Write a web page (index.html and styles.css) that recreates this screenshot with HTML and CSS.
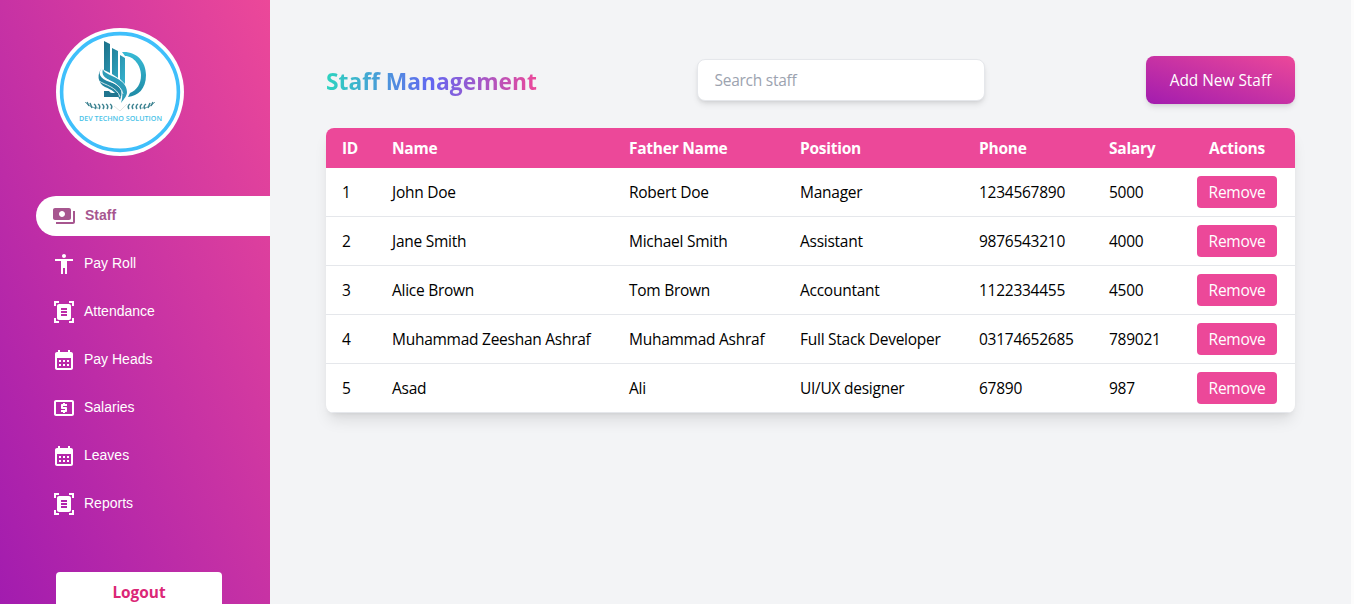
FILE: index.html
```html
<!DOCTYPE html>
<html lang="en">
<head>
<meta charset="utf-8">
<title>Staff Management</title>
<link rel="stylesheet" href="styles.css">
</head>
<body>
<svg class="defs" width="0" height="0" aria-hidden="true">
  <symbol id="i-scan" viewBox="0 0 24 24"><path d="M7 3H4v3H2V1h5v2zm15 3V1h-5v2h3v3h2zM7 21H4v-3H2v5h5v-2zm13-3v3h-3v2h5v-5h-2zM19 18c0 1.1-.9 2-2 2H7c-1.1 0-2-.9-2-2V6c0-1.1.9-2 2-2h10c1.1 0 2 .9 2 2v12zM15 8H9v2h6V8zm0 3H9v2h6v-2zm0 3H9v2h6v-2z"/></symbol>
  <symbol id="i-cal" viewBox="0 0 24 24"><path d="M19 4h-1V2h-2v2H8V2H6v2H5c-1.11 0-1.99.9-1.99 2L3 20c0 1.1.89 2 2 2h14c1.1 0 2-.9 2-2V6c0-1.1-.9-2-2-2zm0 16H5V10h14v10zM9 14H7v-2h2v2zm4 0h-2v-2h2v2zm4 0h-2v-2h2v2zm-8 4H7v-2h2v2zm4 0h-2v-2h2v2zm4 0h-2v-2h2v2z"/></symbol>
</svg>
<div class="app">
  <aside class="sidebar">
    <svg class="logo" viewBox="0 0 128 128">
      <defs>
        <linearGradient id="lg" x1="0" y1="0" x2="1" y2="1"><stop offset="0" stop-color="#1b6f88"/><stop offset="1" stop-color="#36b3cf"/></linearGradient>
        <linearGradient id="ld" x1="0" y1="0" x2="0" y2="1"><stop offset="0" stop-color="#38bbd6"/><stop offset="1" stop-color="#1f8aa5"/></linearGradient>
      </defs>
      <circle cx="64" cy="64" r="64" fill="#fff"/>
      <circle cx="64" cy="64" r="58.4" fill="none" stroke="#3fbffb" stroke-width="3.6"/>
      <path d="M66 24C80 23 90 33 90 47S82 68 72 69L74 65C81 62 85 56 85 47S78 28 69 28Z" fill="url(#ld)"/>
      <path d="M48 13L54 16V45L48 42ZM56 20L62 23V50L56 46ZM64 27L69 30V56L64 51Z" fill="url(#lg)"/>
      <path d="M46 40C41 45 44 51 54 54C64 57 68 62 64 72C60 64 56 62 49 59C41 55 41 45 46 40Z" fill="#2385a0"/>
      <path d="M47 41C48 48 71 49 71 64C71 68 68 71 65 75C69 63 64 57 55 53C49 50 45 47 47 41Z" fill="#2e9cb8"/>
      <path d="M45 47C50 53 65 55 67 66M43 53C49 57 61 59 64 69" fill="none" stroke="#fff" stroke-width=".8"/>
      <path d="M48 63H53Q54 65 56 65H62V69H48Z" fill="#20758f"/>
      <g fill="none" stroke="#3f8492" stroke-width="1.5">
        <path d="M29 74Q34 80 42 80M99 74Q94 80 86 80" stroke-width=".7"/>
        <path d="M31 74l2 4M34 75l2 5M38 76q3 2 1 5M42 76q3 2 1 5M46 76q3 2 1 5M50 76q3 2 1 5M54 76q3 2 1 5"/>
        <path d="M97 74l-2 4M94 75l-2 5M90 76q-3 2-1 5M86 76q-3 2-1 5M82 76q-3 2-1 5M78 76q-3 2-1 5M74 76q-3 2-1 5"/>
      </g>
      <path d="M58 78L64 83L71 76" fill="none" stroke="#ddd" stroke-width=".8"/>
      <text class="logo-text" x="64.5" y="93.2" text-anchor="middle" textLength="83" lengthAdjust="spacingAndGlyphs">DEV TECHNO SOLUTION</text>
    </svg>
    <nav class="nav">
      <a class="item active"><svg viewBox="0 0 24 24"><path d="M19 14V6c0-1.1-.9-2-2-2H3c-1.1 0-2 .9-2 2v8c0 1.1.9 2 2 2h14c1.1 0 2-.9 2-2zm-9-1c-1.66 0-3-1.34-3-3s1.34-3 3-3 3 1.34 3 3-1.34 3-3 3zm13-6v11c0 1.1-.9 2-2 2H4v-2h17V7h2z"/></svg><span>Staff</span></a>
      <a class="item"><svg viewBox="0 0 24 24"><path d="M12 2c1.1 0 2 .9 2 2s-.9 2-2 2-2-.9-2-2 .9-2 2-2zm9 7h-6v13h-2v-6h-2v6H9V9H3V7h18v2z"/></svg><span>Pay Roll</span></a>
      <a class="item"><svg><use href="#i-scan"/></svg><span>Attendance</span></a>
      <a class="item"><svg><use href="#i-cal"/></svg><span>Pay Heads</span></a>
      <a class="item"><svg viewBox="0 0 24 24"><path d="M11 17h2v-1h1c.55 0 1-.45 1-1v-3c0-.55-.45-1-1-1h-3v-1h4V8h-2V7h-2v1h-1c-.55 0-1 .45-1 1v3c0 .55.45 1 1 1h3v1H9v2h2v1zm9-13H4c-1.11 0-1.99.89-1.99 2L2 18c0 1.11.89 2 2 2h16c1.11 0 2-.89 2-2V6c0-1.11-.89-2-2-2zm0 14H4V6h16v12z"/></svg><span>Salaries</span></a>
      <a class="item"><svg><use href="#i-cal"/></svg><span>Leaves</span></a>
      <a class="item"><svg><use href="#i-scan"/></svg><span>Reports</span></a>
    </nav>
    <button class="logout">Logout</button>
  </aside>
  <main class="main">
    <header class="top">
      <h1>Staff Management</h1>
      <input class="search" type="text" placeholder="Search staff">
      <button class="add">Add New Staff</button>
    </header>
    <table class="staff">
      <colgroup><col class="c1"><col class="c2"><col class="c3"><col class="c4"><col class="c5"><col class="c6"><col class="c7"></colgroup>
      <thead><tr><th>ID</th><th>Name</th><th>Father Name</th><th>Position</th><th>Phone</th><th>Salary</th><th>Actions</th></tr></thead>
      <tbody>
        <tr><td>1</td><td>John Doe</td><td>Robert Doe</td><td>Manager</td><td>1234567890</td><td>5000</td><td><button class="remove">Remove</button></td></tr>
        <tr><td>2</td><td>Jane Smith</td><td>Michael Smith</td><td>Assistant</td><td>9876543210</td><td>4000</td><td><button class="remove">Remove</button></td></tr>
        <tr><td>3</td><td>Alice Brown</td><td>Tom Brown</td><td>Accountant</td><td>1122334455</td><td>4500</td><td><button class="remove">Remove</button></td></tr>
        <tr><td>4</td><td>Muhammad Zeeshan Ashraf</td><td>Muhammad Ashraf</td><td>Full Stack Developer</td><td>03174652685</td><td>789021</td><td><button class="remove">Remove</button></td></tr>
        <tr><td>5</td><td>Asad</td><td>Ali</td><td>UI/UX designer</td><td>67890</td><td>987</td><td><button class="remove">Remove</button></td></tr>
      </tbody>
    </table>
  </main>
</div>
</body>
</html>
```
FILE: styles.css
```css
* { box-sizing: border-box; }
body {
  margin: 0;
  height: 604px;
  overflow: hidden;
  background: #fcfcfc;
  color: #000;
  font: 15.5px/24px "Open Sans", "Noto Sans", sans-serif;
}
button, input { font: inherit; border: 0; margin: 0; }
.defs { display: block; }
.app { display: flex; width: 1351px; height: 604px; background: #f3f4f6; }

.sidebar {
  flex: none;
  display: flex;
  flex-direction: column;
  width: 270px;
  height: 604px;
  padding-top: 28px;
  overflow: hidden;
  background: linear-gradient(to top right, #a21caf, #ec4899);
}
.logo { flex: none; width: 128px; height: 128px; margin-left: 56px; }
.logo-text { font: 600 7px "Open Sans", sans-serif; fill: #4cc3e8; }
.nav { display: flex; flex-direction: column; gap: 8px; margin: 40px 0 0 36px; }
.item {
  display: flex;
  align-items: center;
  gap: 8px;
  height: 40px;
  padding-left: 16px;
  color: #fff;
  font: 14px/20px "Liberation Sans", Arial, sans-serif;
}
.item svg { width: 24px; height: 24px; fill: currentColor; }
.item span { padding-bottom: 2px; }
.item.active {
  gap: 9px;
  border-radius: 20px 0 0 20px;
  background: #fff;
  color: #a7568f;
  font-weight: 700;
}
.logout {
  flex: none;
  width: 166px;
  height: 40px;
  margin: 48px 0 0 56px;
  padding: 1px 0 0;
  border-radius: 4px;
  background: #fff;
  color: #db2777;
  font-size: 15.4px;
  font-weight: 700;
}

.main { flex: 1; padding: 56px 56px 0; }
.top { display: flex; justify-content: space-between; align-items: center; height: 48px; margin-bottom: 24px; }
h1 {
  margin: 0;
  padding-top: 4px;
  font-size: 22.8px;
  line-height: 32px;
  font-weight: 700;
  color: transparent;
  background: linear-gradient(to right, #2dd4bf, #6366f1, #ec4899);
  -webkit-background-clip: text;
  background-clip: text;
}
.search {
  width: 288px;
  height: 42px;
  padding: 8px 16px;
  border: 1px solid #e5e7eb;
  border-radius: 8px;
  background: #fff;
  letter-spacing: -0.25px;
  box-shadow: 0 4px 6px -1px rgba(0,0,0,.1), 0 2px 4px -2px rgba(0,0,0,.1);
}
.search::placeholder { color: #9ca3af; }
.add {
  width: 149px;
  height: 48px;
  padding: 1px 0 0;
  border-radius: 8px;
  color: #fff;
  font-size: 15.4px;
  background: linear-gradient(to top right, #a21caf, #ec4899);
  box-shadow: 0 4px 6px -1px rgba(0,0,0,.1), 0 2px 4px -2px rgba(0,0,0,.1);
}
.staff {
  width: 969px;
  table-layout: fixed;
  border-collapse: separate;
  border-spacing: 0;
  border-radius: 8px;
  overflow: hidden;
  background: #fff;
  letter-spacing: -0.26px;
  box-shadow: 0 10px 15px -3px rgba(0,0,0,.1), 0 4px 6px -4px rgba(0,0,0,.1);
}
.c1 { width: 50px; }
.c2 { width: 237px; }
.c3 { width: 171px; }
.c4 { width: 179px; }
.c5 { width: 130px; }
.c6 { width: 86px; }
.c7 { width: 116px; }
th { height: 40px; padding: 0 16px; background: #ec4899; color: #fff; text-align: left; font-weight: 700; }
td { height: 49px; padding: 0 16px; border-bottom: 1px solid #e5e7eb; white-space: nowrap; }
th:last-child { padding: 0; text-align: center; }
td:last-child { padding: 0 18px; }
.remove { display: block; width: 80px; height: 32px; padding: 0; border-radius: 4px; background: #ec4899; color: #fff; letter-spacing: -0.26px; }
```
